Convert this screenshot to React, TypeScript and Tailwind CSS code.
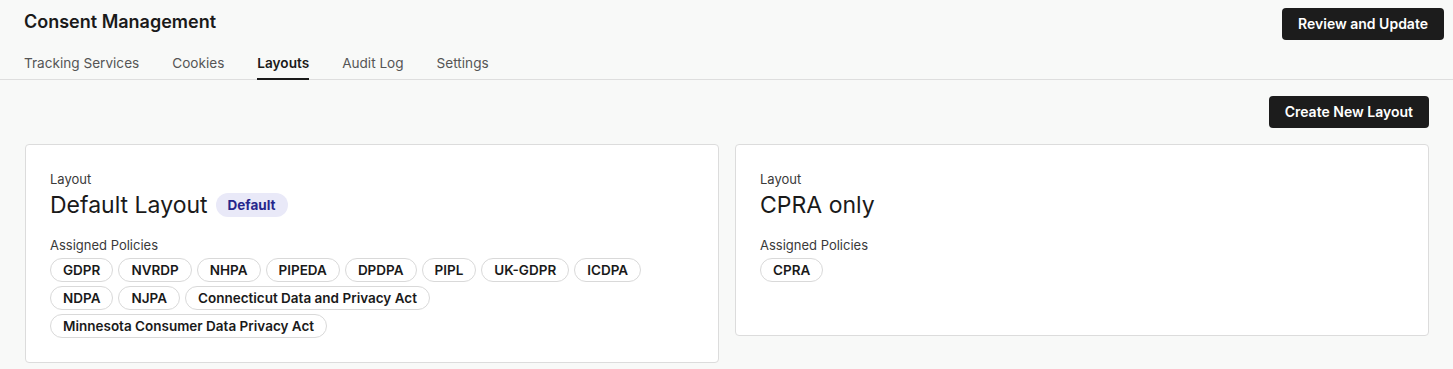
import React from "react";

const font = { fontFamily: "Inter, 'Noto Sans', sans-serif" };

function Chip({ label }: { label: string }) {
  return (
    <span className="inline-flex h-6 items-center rounded-full border border-[#d9d9d9] bg-white px-3 text-[13.5px] font-semibold text-[#1a1a1a]">
      {label}
    </span>
  );
}

function Card({
  title,
  badge,
  policies,
}: {
  title: string;
  badge?: string;
  policies: string[];
}) {
  return (
    <div className="min-h-[192px] rounded-[4px] border border-[#dcdcdc] bg-white px-6 pb-6 pt-6">
      <div className="text-[13px] leading-5 text-[#3a3a3a]">Layout</div>
      <div className="flex items-center gap-2">
        <div className="text-[23px] leading-8 text-[#1a1a1a]">{title}</div>
        {badge && (
          <span className="inline-flex h-6 items-center rounded-full bg-[#e9e9f8] px-3 text-[13.5px] font-bold text-[#26268c]">
            {badge}
          </span>
        )}
      </div>
      <div className="mt-4 text-[13px] leading-4 text-[#3a3a3a]">Assigned Policies</div>
      <div className="mt-[5px] flex flex-wrap gap-x-[5px] gap-y-1">
        {policies.map((p) => (
          <Chip key={p} label={p} />
        ))}
      </div>
    </div>
  );
}

export default function App() {
  const tabs = ["Tracking Services", "Cookies", "Layouts", "Audit Log", "Settings"];
  return (
    <div className="min-h-[369px] bg-[#f8f9f8]" style={font}>
      <div className="flex items-start justify-between pl-6 pr-[9px] pt-2">
        <h1 className="text-lg font-semibold leading-7 text-[#1a1a1a]">Consent Management</h1>
        <button className="h-8 rounded-[4px] bg-[#1c1c1c] px-4 text-sm font-semibold text-white">
          Review and Update
        </button>
      </div>
      <div className="mt-[13px] flex gap-[33px] border-b border-[#dedede] pl-6">
        {tabs.map((t) => (
          <div
            key={t}
            className={
              t === "Layouts"
                ? "-mb-px border-b-2 border-[#1a1a1a] pb-[5px] text-[13.6px] font-semibold leading-5 text-[#1a1a1a]"
                : "-mb-px border-b-2 border-transparent pb-[5px] text-[13.6px] leading-5 text-[#555]"
            }
          >
            {t}
          </div>
        ))}
      </div>
      <div className="pl-[25px] pr-6 pt-4">
        <div className="flex justify-end">
          <button className="h-8 rounded-[4px] bg-[#1c1c1c] px-4 text-sm font-semibold text-white">
            Create New Layout
          </button>
        </div>
        <div className="mt-4 grid grid-cols-2 items-start gap-4">
          <Card
            title="Default Layout"
            badge="Default"
            policies={[
              "GDPR",
              "NVRDP",
              "NHPA",
              "PIPEDA",
              "DPDPA",
              "PIPL",
              "UK-GDPR",
              "ICDPA",
              "NDPA",
              "NJPA",
              "Connecticut Data and Privacy Act",
              "Minnesota Consumer Data Privacy Act",
            ]}
          />
          <Card title="CPRA only" policies={["CPRA"]} />
        </div>
      </div>
    </div>
  );
}
